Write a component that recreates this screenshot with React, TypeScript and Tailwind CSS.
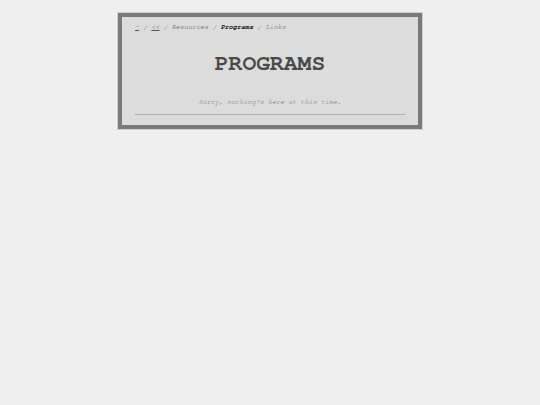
export default function App() {
  return (
    <div className="min-h-screen w-full bg-[#efefef] pt-[13px]" style={{ fontFamily: 'FreeMono, "Liberation Mono", monospace' }}>
      <div className="mx-auto w-[304px] border-4 border-[#7a7a7a] bg-[#dcdcdc] px-[13px] pt-[5px] pb-[10px] outline outline-1 outline-[#cfcfcf]">
        <div className="text-[6.8px] italic leading-[10px] text-[#555]">
          <a className="underline">^</a> / <a className="underline">&lt;&lt;</a> / <a>Resources</a> /{' '}
          <span className="font-bold text-[#111]">Programs</span> / <a className="text-[#666]">Links</a>
        </div>
        <h1 className="mt-[17px] text-center text-[23px] font-bold leading-[30px] text-[#4a4a4a]">PROGRAMS</h1>
        <p className="mt-[18px] text-center text-[6.8px] italic leading-[10px] text-[#777]">
          Sorry, nothing's here at this time.
        </p>
        <div className="mt-[7px] h-px bg-[#b0b0b0]" />
      </div>
    </div>
  );
}
